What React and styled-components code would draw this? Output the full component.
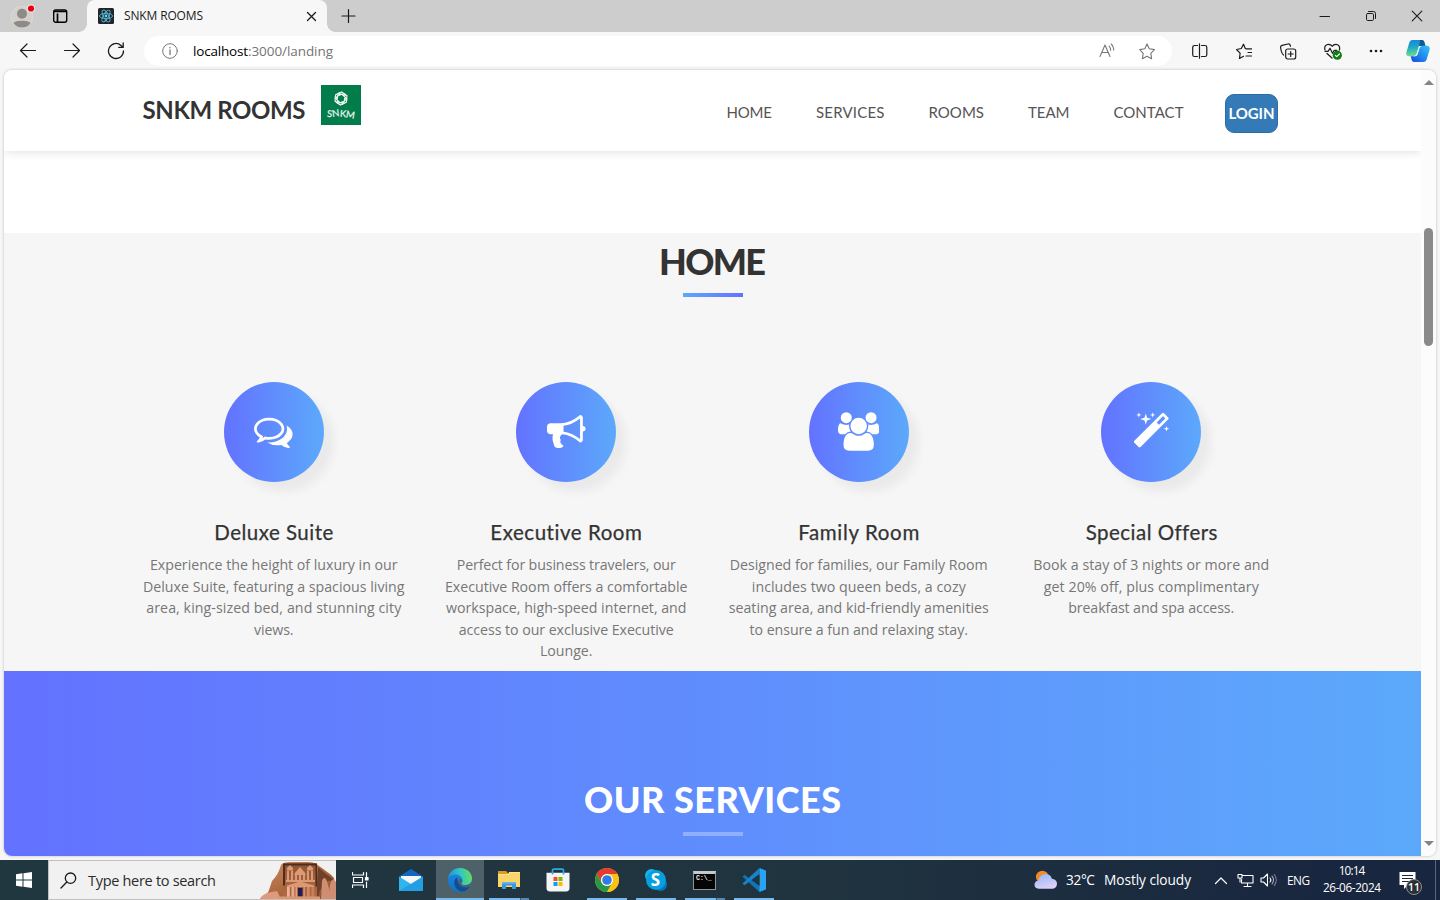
import React, { useLayoutEffect, useRef, useState } from "react";
import styled, { createGlobalStyle, css } from "styled-components";

const UI = `"Open Sans", "Noto Sans", sans-serif`;
const BRAND = `Lato, "Open Sans", sans-serif`;

const GlobalStyle = createGlobalStyle`
  *, *::before, *::after { box-sizing: border-box; }
  html, body { margin: 0; padding: 0; overflow: hidden; }
  body { font-family: ${UI}; color: #111; }
  h1, h2, h3, p { margin: 0; font-weight: inherit; }
  svg { display: block; flex: none; }
`;

/* ---------- text whose tracking is fitted to a given width ---------- */
const Line = styled.span`
  display: block;
  flex: none;
  width: ${(p) => p.$w}px;
  white-space: nowrap;
  overflow: visible;
`;

function Fit({ w, children, className }) {
  const ref = useRef(null);
  const [tracking, setTracking] = useState(0);
  useLayoutEffect(() => {
    const natural = ref.current.getBoundingClientRect().width;
    const count = String(children).length;
    setTracking((w - natural) / Math.max(1, count - 1));
  }, [w, children]);
  return (
    <Line $w={w} className={className}>
      <span ref={ref} style={{ letterSpacing: `${tracking}px` }}>{children}</span>
    </Line>
  );
}

/* ---------- browser frame ---------- */
const Screen = styled.div`
  width: 1440px;
  height: 900px;
  display: flex;
  flex-direction: column;
  background: #f7f7f7;
  overflow: hidden;
`;

const TabStrip = styled.div`
  flex: none;
  height: 32px;
  display: flex;
  align-items: center;
  background: #cdcdcd;
`;

const Slot = styled.div`
  flex: none;
  width: ${(p) => p.$w}px;
  display: flex;
  align-items: center;
  justify-content: center;
`;

const Spacer = styled.div`
  flex: 1;
`;

const Tab = styled.div`
  position: relative;
  flex: none;
  width: 240px;
  height: 32px;
  margin-left: 10px;
  padding: 0 10px 0 11px;
  display: flex;
  align-items: center;
  background: #f7f7f7;
  border-radius: 8px 8px 0 0;
  &::before, &::after {
    content: "";
    position: absolute;
    bottom: 0;
    width: 8px;
    height: 8px;
  }
  &::before { left: -8px; background: radial-gradient(circle at 0 0, transparent 7.5px, #f7f7f7 8px); }
  &::after { right: -8px; background: radial-gradient(circle at 100% 0, transparent 7.5px, #f7f7f7 8px); }
`;

const TabTitle = styled(Fit)`
  margin-left: 10px;
  font-size: 12px;
  line-height: 16px;
  color: #1b1b1b;
`;

const Toolbar = styled.div`
  flex: none;
  height: 38px;
  display: flex;
  align-items: center;
  padding-left: 6px;
`;

const AddressBar = styled.div`
  flex: none;
  width: 1028px;
  height: 30px;
  margin-left: 6px;
  padding: 0 16px 0 18px;
  display: flex;
  align-items: center;
  background: #fff;
  border-radius: 15px;
  font-size: 13.5px;
  line-height: 20px;
`;

const Host = styled(Fit)`
  margin-left: 15px;
  color: #000;
`;

const Path = styled(Fit)`
  color: #747474;
`;

const Viewport = styled.div`
  flex: none;
  width: 1432px;
  height: 786px;
  margin: 0 0 0 4px;
  display: flex;
  background: #fff;
  border-radius: 8px;
  box-shadow: 0 0 3px rgba(0, 0, 0, 0.25);
  overflow: hidden;
`;

const Page = styled.div`
  flex: none;
  width: 1417px;
  display: flex;
  flex-direction: column;
  overflow: hidden;
`;

const ScrollTrack = styled.div`
  flex: 1;
  display: flex;
  flex-direction: column;
  align-items: center;
  padding: 10px 0 10px 0;
  background: #fcfcfc;
`;

const ScrollArrow = styled.div`
  width: 0;
  height: 0;
  border: 5px solid transparent;
  border-top-width: ${(p) => (p.$down ? 5 : 0)}px;
  border-bottom-width: ${(p) => (p.$down ? 0 : 5)}px;
  ${(p) => (p.$down ? css`border-top-color: #858585;` : css`border-bottom-color: #858585;`)}
`;

const ScrollThumb = styled.div`
  width: 9px;
  height: 118px;
  margin-top: 143px;
  border-radius: 5px;
  background: #8a8a8a;
`;

/* ---------- landing page ---------- */
const Navbar = styled.nav`
  position: relative;
  flex: none;
  height: 81px;
  display: flex;
  align-items: flex-start;
  padding-left: 138.5px;
  background: #fff;
  box-shadow: 0 0 10px rgba(0, 0, 0, 0.15);
`;

const Brand = styled(Fit)`
  margin-top: 24px;
  font-family: ${BRAND};
  font-weight: 700;
  font-size: 24px;
  line-height: 32px;
  color: #333;
`;

const LogoBox = styled.div`
  flex: none;
  width: 40px;
  height: 40px;
  margin: 15px 0 0 15.5px;
  padding-top: 6px;
  display: flex;
  flex-direction: column;
  align-items: center;
  background: #037c4b;
`;

const LogoWord = styled.div`
  display: flex;
  gap: 0.2px;
  margin-top: 1px;
  font-family: ${BRAND};
  font-weight: 400;
  font-size: 9.5px;
  line-height: 13px;
  color: #eaf6f0;
  -webkit-text-stroke: 0.2px #eaf6f0;
`;

const LogoLetter = styled.span`
  transform: translateY(${(p) => p.$y}px) rotate(${(p) => p.$r}deg);
`;

const Links = styled.div`
  display: flex;
  gap: 44px;
  margin: 31px 0 0 365.5px;
`;

const NavLink = styled(Fit)`
  font-family: ${BRAND};
  font-size: 15px;
  line-height: 22px;
  color: #555;
`;

const LoginButton = styled.div`
  flex: none;
  width: 53px;
  height: 39px;
  margin: 24px 0 0 41.500px;
  display: flex;
  align-items: center;
  justify-content: center;
  padding-bottom: 1px;
  background: #337ab7;
  border: 1px solid #2e6da4;
  border-radius: 9px;
  font-family: ${BRAND};
  font-weight: 700;
  font-size: 15px;
  line-height: 20px;
  color: #fff;
`;

const HomeSection = styled.section`
  flex: none;
  height: 438px;
  margin-top: 82px;
  padding-top: 8px;
  display: flex;
  flex-direction: column;
  align-items: center;
  background: #f6f6f6;
`;

const ServicesSection = styled.section`
  flex: 1;
  padding-top: 108px;
  display: flex;
  flex-direction: column;
  align-items: center;
  background: linear-gradient(to right, #6372ff 0%, #5ca9fb 100%);
`;

const Heading = styled(Fit)`
  font-family: ${BRAND};
  font-weight: 900;
  font-size: 36px;
  line-height: 40px;
  color: #333;
`;
const LightHeading = styled(Heading)`
  color: #fff;
`;

const Rule = styled.div`
  flex: none;
  width: 60px;
  height: 4px;
  margin-top: ${(p) => p.$top}px;
  background: ${(p) => (p.$light ? "rgba(255,255,255,.3)" : "linear-gradient(to right, #5ca9fb 0%, #6372ff 100%)")};
`;

const Cards = styled.div`
  width: 1170px;
  margin-top: 85px;
  display: grid;
  grid-template-columns: repeat(4, 1fr);
`;

const Card = styled.article`
  display: flex;
  flex-direction: column;
  align-items: center;
`;

const Disc = styled.div`
  width: 100px;
  height: 100px;
  padding-top: 30px;
  display: flex;
  justify-content: center;
  align-items: flex-start;
  border-radius: 50%;
  background: linear-gradient(to right, #6372ff 0%, #5ca9fb 100%);
  box-shadow: 10px 10px 10px rgba(0, 0, 0, 0.05);
`;

const CardTitle = styled(Fit)`
  margin-top: 35px;
  font-family: ${BRAND};
  font-size: 20.5px;
  line-height: 30px;
  color: #333;
  -webkit-text-stroke: 0.25px #333;
`;

const CardText = styled.div`
  margin-top: 7.3px;
  display: flex;
  flex-direction: column;
  align-items: center;
  font-size: 14.2px;
  line-height: 21.43px;
  color: #777;
`;

/* ---------- taskbar ---------- */
const Taskbar = styled.div`
  flex: none;
  height: 40px;
  margin-top: 4px;
  display: flex;
  align-items: stretch;
  background: linear-gradient(to right, #20373f 0%, #20343f 55%, #1c2d3f 75%, #19263f 92%);
  color: #fff;
`;

const SearchBox = styled.div`
  flex: none;
  width: 288px;
  display: flex;
  align-items: center;
  padding-left: 11px;
  background: #f1f1f1;
  border: 1px solid #c0c0c0;
  border-right: 0;
  overflow: hidden;
`;

const SearchText = styled(Fit)`
  margin: 2px 0 0 11px;
  font-size: 14.5px;
  line-height: 20px;
  color: #2b2b2b;
`;

const TaskButton = styled.div`
  flex: none;
  width: ${(p) => p.$w || 49}px;
  height: 40px;
  display: flex;
  flex-direction: column;
  align-items: center;
  background: ${(p) => (p.$active ? "#4e6168" : "transparent")};
`;

const IconArea = styled.div`
  height: 38px;
  padding-top: 2px;
  display: flex;
  align-items: center;
`;

const Running = styled.div`
  width: ${(p) => p.$w}px;
  height: 2px;
  display: flex;
  background: ${(p) => (p.$none ? "transparent" : "#76b9ed")};
`;

const Stack = styled.div`
  width: 9px;
  height: 2px;
  margin-left: auto;
  background: #5788b0;
  border-left: 1px solid #3c5f79;
`;

const Weather = styled(Fit)`
  margin-left: 9px;
  align-self: center;
  font-size: 13.7px;
  line-height: 20px;
  color: #fff;
`;

const Tray = styled.div`
  display: flex;
  align-items: center;
  gap: 8px;
  margin-left: 22px;
`;

const Lang = styled(Fit)`
  margin-left: 10px;
  align-self: center;
  font-size: 11.8px;
  line-height: 20px;
`;

const Clock = styled.div`
  flex: none;
  width: 58px;
  margin-left: 13px;
  padding-top: 1.500px;
  display: flex;
  flex-direction: column;
  align-items: center;
  font-size: 11.8px;
  line-height: 17.500px;
`;

const Notice = styled.div`
  position: relative;
  flex: none;
  width: 19px;
  margin-left: 17px;
  padding: 12px 0 0 1px;
`;

const Badge = styled.div`
  position: absolute;
  left: 8px;
  top: 19px;
  width: 16px;
  height: 16px;
  display: flex;
  align-items: center;
  justify-content: center;
  border-radius: 50%;
  border: 1px solid #8c8f92;
  background: #2a2f34;
  font-size: 10.5px;
  font-weight: 600;
  line-height: 14px;
`;

const PeekLine = styled.div`
  width: 1px;
  margin-left: 18px;
  background: #5a6679;
`;

/* ---------- drawings ---------- */
const Stroke = ({ w = 20, h = 20, vb, sw = 1.2, c = "#1b1b1b", children }) => (
  <svg width={w} height={h} viewBox={vb || `0 0 ${w} ${h}`} fill="none" stroke={c} strokeWidth={sw} strokeLinecap="round" strokeLinejoin="round">
    {children}
  </svg>
);

const Profile = () => (
  <svg width="26" height="26" viewBox="0 0 26 26">
    <circle cx="13" cy="14" r="10.8" fill="#d4d0cc" stroke="#dedad5" strokeWidth="0.8" />
    <circle cx="13" cy="10.8" r="5" fill="#8e8a87" />
    <path d="M4.500 20c1.800-3 15-3 17 0-3.500 6-13.500 6-17 0z" fill="#8e8a87" />
    <circle cx="22" cy="5.500" r="4" fill="#f5e8e6" />
    <circle cx="22" cy="5.500" r="3.100" fill="#e80010" />
  </svg>
);

const TabActions = () => (
  <Stroke w={16} h={16} vb="1 0 16 16" sw={1.4} c="#000">
    <rect x="1.700" y="2" width="13" height="12.300" rx="2" />
    <path d="M2.200 3.500h12M5.500 6v8" strokeWidth="1.700" />
  </Stroke>
);

const ReactMark = () => (
  <svg width="16" height="16" viewBox="0 0 16 16">
    <rect width="16" height="16" rx="1.500" fill="#212529" />
    <g fill="none" stroke="#54b6d0" strokeWidth="0.9">
      <ellipse cx="8" cy="8" rx="6.600" ry="2.600" />
      <ellipse cx="8" cy="8" rx="6.600" ry="2.600" transform="rotate(60 8 8)" />
      <ellipse cx="8" cy="8" rx="6.600" ry="2.600" transform="rotate(120 8 8)" />
    </g>
    <circle cx="8" cy="8" r="1.400" fill="#5fd3f0" />
  </svg>
);

const CopilotMark = () => (
  <svg width="24" height="24" viewBox="0 0 24 24">
    <defs>
      <linearGradient id="cpA" x1="0.200" y1="0" x2="0.300" y2="1">
        <stop offset="0" stopColor="#1687d8" /><stop offset="0.450" stopColor="#1fa8c8" /><stop offset="1" stopColor="#6fe08a" />
      </linearGradient>
      <linearGradient id="cpB" x1="1" y1="0" x2="0" y2="1">
        <stop offset="0" stopColor="#35c4f4" /><stop offset="0.500" stopColor="#1f8cf0" /><stop offset="1" stopColor="#1c45dc" />
      </linearGradient>
    </defs>
    <path d="M6.500 1h9.200c1.700 0 2.500 1.300 2.900 3l.8 3h-4.200c-1.500 0-2.300 1-2.700 2.200L10.700 15c-.5 1.400-1.300 2.200-3 2.200H3C.9 17.200-.2 15.500.4 13.200L3.200 4C3.800 2 4.800 1 6.500 1z" fill="url(#cpA)" />
    <path d="M14 1h1.700c1.700 0 2.500 1.300 2.900 3l.8 3h-4.200c-1 0-1.700.4-2.200 1z" fill="#14598f" />
    <path d="M17.500 23H8.300c-1.700 0-2.500-1.300-2.900-3l-.8-2.800h4.200c1.500 0 2.300-1 2.700-2.200L13.300 9c.5-1.400 1.300-2.200 3-2.200H21c2.100 0 3.200 1.700 2.600 4L20.800 20c-.6 2-1.600 3-3.300 3z" fill="url(#cpB)" />
    <path d="M13 6.900h3c-1.400.3-2 1.200-2.500 2.400l-1.700 5.200c-.5 1.600-1.300 2.600-3 2.700H7.500c1.600-.2 2.600-1 3.100-2.400l1.600-5.300c.3-1 .3-1.800.8-2.600z" fill="#f4fbff" />
  </svg>
);

const SnkmMark = () => (
  <svg width="16" height="15" viewBox="-8 -7.500 16 15" fill="none" stroke="#eef8f3" strokeLinecap="round">
    {[0, 60, 120, 180, 240, 300].map((a) => (
      <g key={a} transform={`rotate(${a})`}>
        <path d="M-3 -4.300L0.500 -6.500L4.600 -4" strokeWidth="1.200" />
        <path d="M-2 -3.300L1.200 -4.300L3.700 -2.400" strokeWidth="1.300" />
      </g>
    ))}
  </svg>
);

const FEATURE_PATHS = {
  comments: [1792, "M704 384q-153 0-286 52t-211.500 141-78.500 191q0 82 53 158t149 132l97 56-35 84q34-20 62-39l44-31 53 10q78 14 153 14 153 0 286-52t211.500-141 78.500-191-78.500-191-211.500-141-286-52zm0-128q191 0 353.500 68.500t256.500 186.500 94 257-94 257-256.500 186.500-353.500 68.500q-86 0-176-16-124 88-278 128-36 9-86 16h-3q-11 0-20.500-8t-11.500-21q-1-3-1-6.500t.5-6.500 2-6l2.500-5 3.500-5.500 4-5 4.500-5 4-4.500q5-6 23-25t26-29.500 22.500-29 25-38.500 20.500-44q-124-72-195-177t-71-224q0-139 94-257t256.500-186.500 353.500-68.500zm822 1169q10 24 20.500 44t25 38.500 22.500 29 26 29.500 23 25q1 1 4 4.500t4.500 5 4 5 3.500 5.500l2.500 5 2 6 .5 6.500-1 6.500q-3 14-13 22t-22 7q-50-7-86-16-154-40-278-128-90 16-176 16-271 0-472-132 58 4 88 4 161 0 309-45t264-129q125-92 192-212t67-254q0-77-23-152 129 71 204 178t75 230q0 120-71 224.500t-195 176.500z"],
  bullhorn: [1792, "M1664 640q53 0 90.500 37.500t37.500 90.500-37.500 90.500-90.500 37.500v384q0 52-38 90t-90 38q-417-347-812-380-58 19-91 66t-31 100.500 40 92.500q-20 33-23 65.500t6 58 33.500 55 48 50 61.500 50.500q-29 58-111.500 83t-168.500 11.500-132-55.500q-7-23-29.500-87.500t-32-94.500-23-89-15-101 3.500-98.500 22-110.500h-122q-66 0-113-47t-47-113v-192q0-66 47-113t113-47h480q435 0 896-384 52 0 90 38t38 90v384zm-128 604v-954q-394 302-768 343v270q377 42 768 341z"],
  group: [1920, "M593 896q-162 5-265 128h-134q-82 0-138-40.500t-56-118.500q0-353 124-353 6 0 43.500 21t97.500 42.500 119 21.500q67 0 133-23-5 37-5 66 0 139 81 256zm1071 637q0 120-73 189.500t-194 69.500h-874q-121 0-194-69.500t-73-189.500q0-53 3.500-103.500t14-109 26.500-108.500 43-97.500 62-81 85.500-53.500 111.500-20q10 0 43 21.500t73 48 107 48 135 21.500 135-21.500 107-48 73-48 43-21.500q61 0 111.500 20t85.500 53.500 62 81 43 97.500 26.500 108.500 14 109 3.500 103.500zm-1024-1277q0 106-75 181t-181 75-181-75-75-181 75-181 181-75 181 75 75 181zm704 384q0 159-112.500 271.500t-271.500 112.500-271.500-112.500-112.500-271.500 112.500-271.500 271.500-112.500 271.500 112.500 112.500 271.500zm576 225q0 78-56 118.500t-138 40.500h-134q-103-123-265-128 81-117 81-256 0-29-5-66 66 23 133 23 59 0 119-21.500t97.500-42.500 43.500-21q124 0 124 353zm-128-609q0 106-75 181t-181 75-181-75-75-181 75-181 181-75 181 75 75 181z"],
  magic: [1792, "M1254 581l293-293-107-107-293 293zm447-293q0 27-18 45l-1286 1286q-18 18-45 18t-45-18l-198-198q-18-18-18-45t18-45l1286-1286q18-18 45-18t45 18l198 198q18 18 18 45zm-1351-190l98 30-98 30-30 98-30-98-98-30 98-30 30-98zm350 162l196 60-196 60-60 196-60-196-196-60 196-60 60-196zm930 478l98 30-98 30-30 98-30-98-98-30 98-30 30-98zm-640-640l98 30-98 30-30 98-30-98-98-30 98-30 30-98z"],
};

const FeatureIcon = ({ name }) => {
  const [w, d] = FEATURE_PATHS[name];
  return (
    <svg width={(w / 1792) * 38.6} height="39" viewBox={`0 0 ${w} 1792`} fill="#fff">
      <path d={d} />
    </svg>
  );
};

const PetraArt = () => (
  <svg width="76" height="38" viewBox="0 0 76 38">
    <defs>
      <linearGradient id="rk" x1="0" y1="0" x2="1" y2="1">
        <stop offset="0" stopColor="#d08a5c" /><stop offset="0.500" stopColor="#ad6a42" /><stop offset="1" stopColor="#85502f" />
      </linearGradient>
      <linearGradient id="rk2" x1="0" y1="0" x2="1" y2="0">
        <stop offset="0" stopColor="#f0b598" /><stop offset="1" stopColor="#c47d58" />
      </linearGradient>
      <linearGradient id="rk3" x1="0" y1="0" x2="0" y2="1">
        <stop offset="0" stopColor="#8d5534" /><stop offset="1" stopColor="#b46d47" />
      </linearGradient>
    </defs>
    <path d="M0 38c2-4 8-4 9-9l3-9c4-4 7-9 9-16 2-4 13-3 22-3 8 0 12 0 16 4 5 4 11 7 15 12l2 21z" fill="url(#rk)" />
    <path d="M58 6l7 6 9 7-6 1-8 9-2 8h-2z" fill="#6f412a" />
    <path d="M23 2.500h34V38H23z" fill="url(#rk3)" />
    <path d="M23 2.500h34V4.500H25v20h-2zM55.500 4.500H57v21h-1.500z" fill="#4e2d1d" />
    <g fill="#dc9a74">
      <path d="M27 7l3-3 3 3v2.500h-6zM47 7l3-3 3 3v2.500h-6zM34.500 12.500L40 6l5.500 6.500V14h-11z" />
      <path d="M27 10h2v9h-2zM31 10h2v9h-2zM47 10h2v9h-2zM51 10h2v9h-2zM35 14h2v5h-2zM43 14h2v5h-2zM39 14h2v5h-2z" />
      <path d="M26 19h29v2H26zM27 24.500L40 20.500l14 4V26H27z" />
    </g>
    <g fill="url(#rk2)">
      <path d="M27 26h2.800V36H27zM31.500 26h2.800V36h-2.800zM35.500 26h1.500V36h-1.500zM43.500 26H45V36h-1.500zM47 26h2.800V36H47zM51.500 26h2.800V36h-2.800z" />
    </g>
    <path d="M38 27h4.500v8.500H38z" fill="#241b52" />
    <path d="M20 35.500h40V38H20z" fill="#df9470" />
    <path d="M0 38c2-5 9-7 17-8l4 8z" fill="#e0997a" />
    <path d="M61 38l1-18c2-6 5-2 6 4l2 6c-1-6 1-11 4-12l2 3v17z" fill="#cf8d72" />
  </svg>
);

const MailArt = () => (
  <svg width="24" height="22" viewBox="0 0 24 22">
    <path d="M0 7.500L12 0l12 7.500V10H0z" fill="#1268bd" />
    <path d="M2 7h20v9H2z" fill="#f5f7f9" />
    <path d="M0 7.500L12 15 24 7.500V22H0z" fill="#2fb5ee" />
    <path d="M24 7.500V22H0z" fill="#1f94dd" opacity="0.650" />
  </svg>
);

const EdgeArt = () => (
  <svg width="24" height="24" viewBox="0 0 24 24">
    <defs>
      <linearGradient id="eg1" x1="0" y1="0.500" x2="1" y2="0.400">
        <stop offset="0" stopColor="#2390dc" /><stop offset="0.500" stopColor="#2fc5c6" /><stop offset="1" stopColor="#66df5b" />
      </linearGradient>
      <linearGradient id="eg2" x1="0" y1="0" x2="0" y2="1">
        <stop offset="0" stopColor="#1c8ddd" /><stop offset="1" stopColor="#1370c5" />
      </linearGradient>
    </defs>
    <circle cx="12" cy="12" r="12" fill="url(#eg2)" />
    <path d="M.2 10C1.300 4 6 0 12 0c7.500 0 12 5.300 12 10.500 0 4.500-3.500 6.700-7 6.700-2.400 0-3.700-.7-3.700-1.600 0-.7 1.100-1.400 1.100-3.200C14.400 9 11 6.500 7.500 6.500 4 6.500 1.300 8 .2 10z" fill="url(#eg1)" />
    <path d="M9 9.200c-2 1.300-3.200 4-2.600 7 .7 4.200 4.500 7 8 7.400 3-.4 6-2.300 7.800-5.400-4.500 2.600-12.200 1.800-13.200-9z" fill="#124c91" />
    <path d="M14.400 12c0 2-1.100 2.700-1.100 3.600 0 .9 1.300 1.600 3.700 1.600 3 0 5-1 6.200-2.500l-1 3.600c-5 2.300-11.500-.4-11.500-5 0-2 1.700-3.500 3.700-1.300z" fill="#4e6168" />
  </svg>
);

const ExplorerArt = () => (
  <svg width="22" height="20" viewBox="0 0 22 20">
    <path d="M0 1h8l2 2v4H0z" fill="#d99b22" />
    <path d="M0 4h10l1.500-2H22v15H0z" fill="#fbd56a" />
    <path d="M0 4h10l1.500-2H22v1H12l-1.500 2H0z" fill="#fde596" />
    <path d="M4 12h14v7h-4v-3.500H8V19H4z" fill="#3c98dc" />
    <path d="M4 12h14v1.800H4z" fill="#62b5ee" />
  </svg>
);

const StoreArt = () => (
  <svg width="24" height="24" viewBox="0 0 24 24">
    <path d="M.5 4.700h23V20c0 2.300-1 3.500-3.500 3.500H4C1.500 23.500.5 22.300.5 20z" fill="#f5f5f5" />
    <path d="M6.500 6.500V2.300C6.500 1.600 7 1.100 8 1.100h8c1 0 1.500.5 1.500 1.200v4.200" fill="none" stroke="#28afe9" strokeWidth="1.700" />
    <path d="M7.500 9h4v4h-4z" fill="#f25022" /><path d="M12.500 9h4v4h-4z" fill="#7fba00" />
    <path d="M7.500 14h4v4h-4z" fill="#00a4ef" /><path d="M12.500 14h4v4h-4z" fill="#ffb900" />
  </svg>
);

const ChromeArt = () => (
  <svg width="24" height="24" viewBox="-12 -12 24 24">
    <circle r="12" fill="#fbc116" />
    <path d="M-10.390 -6A12 12 0 0 1 10.390 -6L0 -6A6 6 0 0 0 -5.200 3z" fill="#e33b2e" />
    <path d="M-10.390 -6A12 12 0 0 0 0 12L5.200 3A6 6 0 0 1 -5.200 3z" fill="#279847" />
    <path d="M0 -6H10.390A12 12 0 0 1 0 12L5.200 3z" fill="#fbc116" />
    <circle r="6" fill="#fff" /><circle r="4.800" fill="#2e7bea" />
  </svg>
);

const SkypeWrap = styled.div`
  position: relative;
  width: 24px;
  height: 24px;
  span {
    position: absolute;
    inset: 0;
    text-align: center;
    font: 700 17px/24px ${UI};
    color: #fff;
  }
`;
const SkypeArt = () => (
  <SkypeWrap>
    <svg width="24" height="24" viewBox="0 0 24 24">
      <circle cx="7.500" cy="7.500" r="6.500" fill="#1bb3ee" /><circle cx="16.500" cy="16.500" r="6.500" fill="#0a72c4" />
      <circle cx="12" cy="12" r="10" fill="#069fe0" />
    </svg>
    <span>S</span>
  </SkypeWrap>
);

const CmdWindow = styled.div`
  width: 23px;
  height: 19px;
  padding: 1px 0 0 2px;
  background: #050505;
  border: 1px solid #8f9496;
  border-top: 3px solid #c6c9ca;
  font: 700 6.5px/8px "Liberation Mono", monospace;
  color: #eee;
`;

const CodeArt = () => (
  <svg width="24" height="24" viewBox="0 0 24 24">
    <path d="M17.500 0L24 2.800v18.400L17.500 24 .5 8.700l2-1.900L17.500 18z" fill="#1173b8" />
    <path d="M17.500 0L24 2.800v18.400L17.500 24z" fill="#2aa1f2" />
    <path d="M17.500 0v6L2.500 17.300.5 15.400z" fill="#1a82cb" />
    <path d="M17.500 6.500v11L10.200 12z" fill="#20343f" />
  </svg>
);

const WeatherArt = () => (
  <svg width="24" height="20" viewBox="-1 0 24.500 20">
    <defs>
      <linearGradient id="cl" x1="0" y1="0" x2="0.400" y2="1">
        <stop offset="0" stopColor="#8fb7f7" /><stop offset="1" stopColor="#dccff8" />
      </linearGradient>
    </defs>
    <circle cx="8.500" cy="7" r="6.500" fill="#f48a22" />
    <path d="M5.500 19C2.500 19 .5 17.200.5 14.800c0-2.300 1.700-4 4-4.300C5.300 6.800 8.500 4 12 4c3.300 0 5.500 2 6.300 4.800 3 .2 5.200 2.300 5.200 5 0 3-2.200 5.200-5.500 5.200z" fill="url(#cl)" />
  </svg>
);

/* ---------- content ---------- */
const LINKS = [["HOME", 45.5], ["SERVICES", 68.5], ["ROOMS", 55.5], ["TEAM", 41.5], ["CONTACT", 70]];

const FEATURES = [
  { icon: "comments", title: "Deluxe Suite", w: 119, lines: [["Experience the height of luxury in our", 247.5], ["Deluxe Suite, featuring a spacious living", 261.5], ["area, king-sized bed, and stunning city", 255], ["views.", 39.5]] },
  { icon: "bullhorn", title: "Executive Room", w: 152, lines: [["Perfect for business travelers, our", 219], ["Executive Room offers a comfortable", 242.5], ["workspace, high-speed internet, and", 240.5], ["access to our exclusive Executive", 215], ["Lounge.", 52.5]] },
  { icon: "group", title: "Family Room", w: 121, lines: [["Designed for families, our Family Room", 258], ["includes two queen beds, a cozy", 214], ["seating area, and kid-friendly amenities", 260], ["to ensure a fun and relaxing stay.", 218.5]] },
  { icon: "magic", title: "Special Offers", w: 131, lines: [["Book a stay of 3 nights or more and", 236], ["get 20% off, plus complimentary", 215], ["breakfast and spa access.", 166]] },
];

const TASKS = [
  { id: "mail", art: <MailArt /> },
  { id: "edge", art: <EdgeArt />, active: true, line: 48 },
  { id: "files", art: <ExplorerArt />, line: 40, stack: true },
  { id: "store", art: <StoreArt /> },
  { id: "chrome", art: <ChromeArt />, line: 40 },
  { id: "skype", art: <SkypeArt />, line: 40 },
  { id: "cmd", art: <CmdWindow>C:\_</CmdWindow>, line: 40, stack: true },
  { id: "code", art: <CodeArt />, line: 40 },
];

export default function App() {
  return (
    <Screen>
      <GlobalStyle />
      <TabStrip>
        <Slot $w={44}><Profile /></Slot>
        <Slot $w={33}><TabActions /></Slot>
        <Tab>
          <ReactMark />
          <TabTitle w={79}>SNKM ROOMS</TabTitle>
          <Spacer />
          <Stroke w={11} h={11} sw={1.300}><path d="M1.500 1.500l8 8M9.500 1.500l-8 8" /></Stroke>
        </Tab>
        <Slot $w={43}><Stroke w={16} h={16}><path d="M7.500 1.500v13M1 8h13" /></Stroke></Slot>
        <Spacer />
        <Slot $w={46}><Stroke w={12} h={12} sw={1}><path d="M1 6.500h9.500" /></Stroke></Slot>
        <Slot $w={46}>
          <Stroke w={12} h={12} sw={1}><rect x="1.500" y="3.500" width="7" height="7" rx="1.200" /><path d="M3.500 1.500h5a2 2 0 0 1 2 2v5" /></Stroke>
        </Slot>
        <Slot $w={46}><Stroke w={12} h={12} sw={1.100}><path d="M1.200 1.200l9.600 9.600M10.800 1.200l-9.600 9.600" /></Stroke></Slot>
      </TabStrip>

      <Toolbar>
        <Slot $w={44}><Stroke w={18} h={18}><path d="M16.500 8.500h-15M8 2L1.500 8.500 8 15" /></Stroke></Slot>
        <Slot $w={44}><Stroke w={18} h={18}><path d="M1.500 8.500h15M10 2L16.500 8.500 10 15" /></Stroke></Slot>
        <Slot $w={44}><Stroke w={18} h={18} sw={1.300}><path d="M16.500 9A7.500 7.500 0 1 1 14 3.400l2 1.800M16.200 1v4.400h-4.400" /></Stroke></Slot>
        <AddressBar>
          <Stroke w={16} h={16} c="#777" sw={1}><circle cx="8" cy="8" r="7.300" /><path d="M8 7v4.500M8 4.500v.3" strokeWidth="1.300" /></Stroke>
          <Host w={55}>localhost</Host>
          <Path w={85}>:3000/landing</Path>
          <Spacer />
          <Stroke w={17} h={16} vb="-1 0 17 16" c="#767676" sw={1.100}><path d="M1 13.500L6 2l5 11.500M2.800 9.500h6.400M10 3.200a5 5 0 0 1 1.600 4M12.300 1a8.500 8.500 0 0 1 2.500 6" /></Stroke>
          <Slot $w={24} />
          <Stroke w={17} h={17} c="#767676" sw={1.100}><path d="M8 .9l2.300 4.900 5.200.8-3.700 3.700.8 5.400L8 13.200l-4.600 2.500.8-5.400L.7 6.600l5.200-.8z" /></Stroke>
        </AddressBar>
        <Slot $w={55}><Stroke w={16} h={16}><path d="M5.500 2.500H2.500a1.800 1.800 0 0 0-1.800 1.800v7.400a1.800 1.800 0 0 0 1.800 1.800h3M9.500 2.500h3.500a1.800 1.800 0 0 1 1.800 1.800v7.400a1.800 1.800 0 0 1-1.800 1.800h-3.500M7.500 .8v14.400" /></Stroke></Slot>
        <Slot $w={34}><Stroke w={18} h={17} vb="-0.500 0 18 17"><path d="M10.500 5.900H16M12.500 9.500H16M10.500 13H16M11 6L9.800 5.500 8 1.200 5.800 5.500 1 6.500l3.600 3.700L4 15.500 8 13.300" /></Stroke></Slot>
        <Slot $w={54}><Stroke w={17} h={17} vb="0.500 0 17 17"><rect x="6.200" y="6" width="10" height="10" rx="2" /><path d="M11.200 8.500v5M8.700 11h5M4 12C2.500 10.800 2 9.500 1.500 7L1.100 4.500C1 3.300 1.500 2.700 2.500 2.400L8.500 1c1.200-.2 2 .4 2.300 1.500l.2.800" /></Stroke></Slot>
        <Slot $w={36}>
          <Stroke w={19} h={17} vb="0.500 0 19 17">
            <path d="M1.500 7C.3 3 3 1.300 5 1.300c1.700 0 3 .8 3.700 2 .8-1.200 2-2 3.700-2 2.500 0 4.500 2.200 3.500 5.700M1.500 8.300h3l2-3 2.500 5 1.800-3h2.400M3.500 10.500l5 4.500" />
            <circle cx="13.800" cy="12.200" r="4.600" fill="#107c10" stroke="none" />
            <path d="M11.800 12.300l1.400 1.400 2.700-2.700" stroke="#fff" />
          </Stroke>
        </Slot>
        <Slot $w={49}><svg width="14" height="4" fill="#1b1b1b"><circle cx="2" cy="2" r="1.300" /><circle cx="7" cy="2" r="1.300" /><circle cx="12" cy="2" r="1.300" /></svg></Slot>
        <Slot $w={36}><CopilotMark /></Slot>
      </Toolbar>

      <Viewport>
        <Page>
          <Navbar>
            <Brand w={163}>SNKM ROOMS</Brand>
            <LogoBox>
              <SnkmMark />
              <LogoWord>
                <LogoLetter $y={0} $r={6}>S</LogoLetter>
                <LogoLetter $y={-0.5} $r={-8}>N</LogoLetter>
                <LogoLetter $y={0} $r={4}>K</LogoLetter>
                <LogoLetter $y={1} $r={10}>M</LogoLetter>
              </LogoWord>
            </LogoBox>
            <Links>
              {LINKS.map(([label, w]) => <NavLink key={label} w={w}>{label}</NavLink>)}
            </Links>
            <LoginButton><Fit w={46}>LOGIN</Fit></LoginButton>
          </Navbar>

          <HomeSection>
            <Heading w={107}>HOME</Heading>
            <Rule $top={12} />
            <Cards>
              {FEATURES.map((f) => (
                <Card key={f.icon}>
                  <Disc><FeatureIcon name={f.icon} /></Disc>
                  <CardTitle w={f.w}>{f.title}</CardTitle>
                  <CardText>
                    {f.lines.map(([text, w]) => <Fit key={text} w={w}>{text}</Fit>)}
                  </CardText>
                </Card>
              ))}
            </Cards>
          </HomeSection>

          <ServicesSection>
            <LightHeading w={257}>OUR SERVICES</LightHeading>
            <Rule $top={13} $light />
          </ServicesSection>
        </Page>
        <ScrollTrack>
          <ScrollArrow />
          <ScrollThumb />
          <Spacer />
          <ScrollArrow $down />
        </ScrollTrack>
      </Viewport>

      <Taskbar>
        <Slot $w={48}>
          <svg width="16" height="16" fill="#fff"><path d="M0 2.200L6.500 1.300V7.500H0zM7.500 1.200L16 0v7.500H7.500zM0 8.500h6.500v6.200L0 13.800zM7.500 8.500H16V16l-8.500-1.200z" /></svg>
        </Slot>
        <SearchBox>
          <Stroke w={17} h={17} sw={1.300}><circle cx="10.500" cy="6.200" r="5.200" /><path d="M6.800 10L1 16" /></Stroke>
          <SearchText w={128}>Type here to search</SearchText>
          <Spacer />
          <PetraArt />
        </SearchBox>
        <Slot $w={50}>
          <Stroke w={18} h={18} vb="1 0 18 18" c="#fff" sw={1.200}><path d="M1.500 1.500v2.500h11V1.500M1.500 16.500V14h11v2.500M2.500 6.500h9v5h-9zM15.500 1.500v4M15.500 11v5.500" /><rect x="14.500" y="6.500" width="2.500" height="2.500" fill="#fff" /></Stroke>
        </Slot>
        {TASKS.map((t) => (
          <TaskButton key={t.id} $active={t.active} $w={t.active ? 48 : t.id === "mail" ? 50 : 49}>
            <IconArea>{t.art}</IconArea>
            <Running $w={t.line || 40} $none={!t.line}>{t.stack && <Stack />}</Running>
          </TaskButton>
        ))}
        <Spacer />
        <Slot $w={24}><WeatherArt /></Slot>
        <Weather w={29}>32°C</Weather>
        <Weather w={87}>Mostly cloudy</Weather>
        <Tray>
          <Slot $w={16}><Stroke w={14} h={9} c="#fff" sw={1.200}><path d="M1.500 7.500L7 2l5.500 5.500" /></Stroke></Slot>
          <Slot $w={16}><Stroke w={17} h={15} c="#fff" sw={1.100}><path d="M5.500 2.500h10.500v7.500H4.500V6.500M1 1.500h4v3.500H1zM3 5v4M10.500 10v3.500M7 13.500h7" /></Stroke></Slot>
          <Slot $w={16}>
            <Stroke w={18} h={14} c="#fff" sw={1.100}><path d="M1 5v4h2.500L7.500 13V1L3.500 5z" /><path d="M10 5a3 3 0 0 1 0 4" /><path d="M12 3.200a6 6 0 0 1 0 7.600" opacity="0.600" /><path d="M14.300 1.500a9 9 0 0 1 0 11" opacity="0.450" /></Stroke>
          </Slot>
        </Tray>
        <Lang w={23}>ENG</Lang>
        <Clock><Fit w={26.5}>10:14</Fit><Fit w={58}>26-06-2024</Fit></Clock>
        <Notice>
          <svg width="17" height="18" viewBox="0 0 17 18"><path d="M.5 0h16v13H9l-4 4v-4H.5z" fill="#fff" /><path d="M3 3.500h11M3 6.500h11M3 9.500h7" stroke="#1b2a3f" strokeWidth="1.200" /></svg>
          <Badge>11</Badge>
        </Notice>
        <PeekLine />
        <Slot $w={4} />
      </Taskbar>
    </Screen>
  );
}
